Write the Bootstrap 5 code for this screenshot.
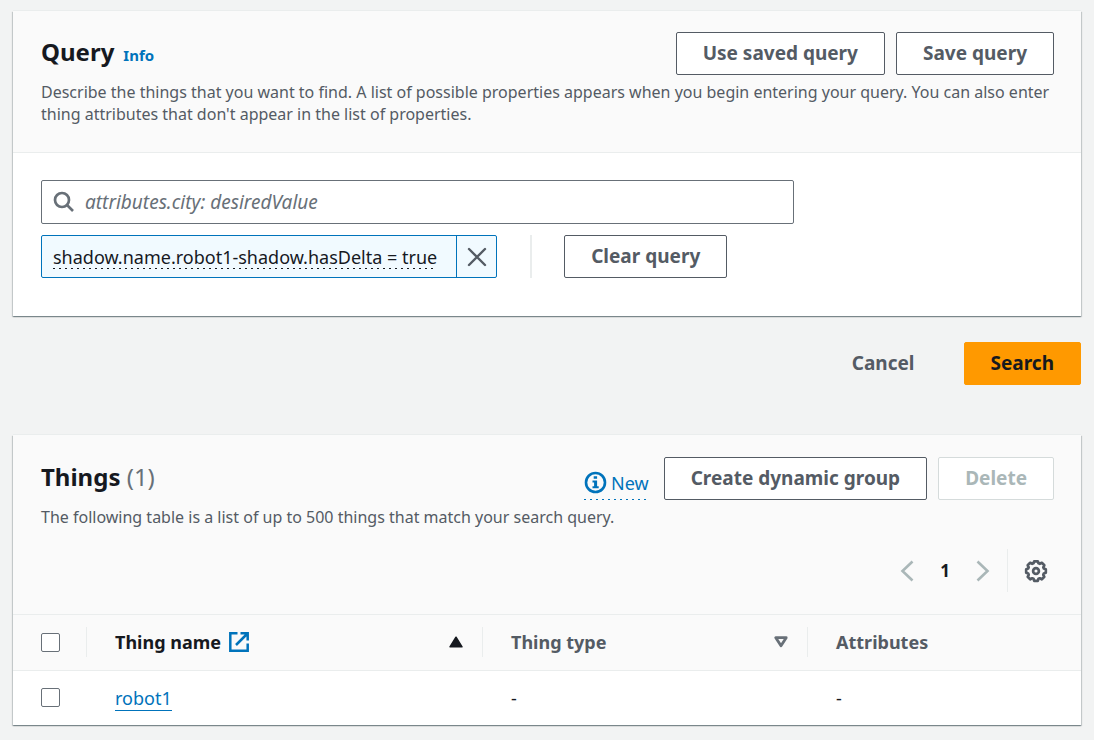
<!DOCTYPE html>
<html lang="en">
<head>
<meta charset="utf-8">
<meta name="viewport" content="width=device-width, initial-scale=1">
<title>Query things</title>
<link rel="stylesheet" href="https://cdn.jsdelivr.net/npm/bootstrap@5.3.0/dist/css/bootstrap.min.css">
<style>
  :root {
    --ink: #16191f;
    --ink-soft: #545b64;
    --ink-muted: #687078;
    --accent: #0073bb;
    --rule: #eaeded;
    --rule-off: #d5dbdb;
    --text-off: #aab7b8;
    --header: #fafafa;
  }
  body {
    font-family: "Noto Sans", "Open Sans", sans-serif;
    font-size: 18px;
    line-height: 24px;
    color: var(--ink);
    background: #f2f3f3;
  }
  a { color: var(--accent); }
  .page { padding: 11px 13px 14px; }
  .panel {
    background: #fff;
    box-shadow: 0 1px 1px 0 rgba(0, 28, 36, .3), 1px 1px 1px 0 rgba(0, 28, 36, .15), -1px 1px 1px 0 rgba(0, 28, 36, .15), 0 -1px 0 0 var(--rule);
  }
  .panel-top { background: var(--header); padding: 21px 27px 27px 28px; border-bottom: 1px solid var(--rule); }
  .panel-list { padding-top: 22px; padding-bottom: 22px; }
  .panel-main { padding: 27px 28px 38px; }
  .panel h2 { font-size: 24px; line-height: 40px; font-weight: 700; }
  .count { font-weight: 400; color: var(--ink-muted); }
  .info-link { font-size: 15px; font-weight: 700; text-decoration: none; }
  .note { font-size: 16px; line-height: 22px; color: var(--ink-soft); margin: 6px 0 0; }
  .btn {
    --bs-btn-font-size: 19px;
    --bs-btn-font-weight: 700;
    --bs-btn-line-height: 25px;
    --bs-btn-padding-x: 26px;
    --bs-btn-padding-y: 8px;
    --bs-btn-border-radius: 2px;
  }
  .btn-plain {
    --bs-btn-color: var(--ink-soft);
    --bs-btn-bg: #fff;
    --bs-btn-border-color: var(--ink-soft);
    --bs-btn-hover-bg: var(--header);
    --bs-btn-hover-color: var(--ink);
    --bs-btn-hover-border-color: var(--ink);
    --bs-btn-disabled-color: var(--text-off);
    --bs-btn-disabled-bg: #fff;
    --bs-btn-disabled-border-color: var(--rule-off);
    --bs-btn-disabled-opacity: 1;
  }
  .btn-quiet { --bs-btn-color: var(--ink-soft); }
  .btn-go {
    --bs-btn-color: var(--ink);
    --bs-btn-bg: #f90;
    --bs-btn-border-color: #f90;
    --bs-btn-hover-bg: #ec7211;
    --bs-btn-hover-border-color: #ec7211;
  }
  .gap-title { gap: 9px; }
  .gap-btn { gap: 11px; }
  .search-box { border: 1px solid var(--ink-muted); border-radius: 2px; height: 44px; padding-left: 11px; gap: 10px; }
  .search-box input { font-size: 19px; outline: 0; color: var(--ink); }
  .search-box input::placeholder { color: var(--ink-muted); font-style: italic; opacity: 1; }
  .tokens { margin-top: 11px; }
  .token { border: 1px solid var(--accent); border-radius: 2px; background: #f1faff; height: 43px; }
  .token-label { padding: 0 19px 0 11px; }
  .dashed-line { background: repeating-linear-gradient(90deg, currentColor 0 2px, transparent 2px 6px) left bottom / 100% 1px no-repeat; }
  .tip-link { padding-bottom: 4px; height: 31px; }
  .token-close { width: 40px; border: 0; border-left: 1px solid var(--accent); background: none; color: var(--ink-soft); padding: 0; line-height: 0; }
  .split { width: 2px; background: var(--rule); margin: 0 32px 0 33px; }
  .actions { padding: 26px 0 50px; gap: 22px; }
  .icon-btn { border: 0; background: none; padding: 0; line-height: 0; }
  .paging { margin-top: 21px; }
  .pager { height: 43px; gap: 26px; font-size: 17px; font-weight: 700; }
  .pager-tools { border-left: 1px solid var(--rule); padding: 0 6px 0 16px; margin-left: 17px; }
  .grid-table { table-layout: fixed; margin: 0; }
  .grid-table > :not(caption) > * > * { padding: 0 28px; height: 55px; vertical-align: middle; border: 0; background: none; color: var(--ink); box-shadow: none; }
  .grid-table thead th { background: var(--header); border-bottom: 1px solid var(--rule); padding: 0; font-weight: 700; }
  .grid-table thead th > div { height: 30px; padding: 0 19px 0 28px; }
  .grid-table thead th:not(:last-child) > div { border-right: 1px solid var(--rule); }
  .soft { color: var(--ink-soft); }
  .grid-table .form-check-input { width: 19px; height: 19px; margin: 0; border: 1px solid var(--ink-muted); border-radius: 2px; display: block; }
  .row-link { text-decoration: none; border-bottom: 1px solid var(--accent); }
  .c-pick { width: 74px; }
  .c-name { width: 396px; }
  .c-type { width: 325px; }
  svg { flex: none; }
</style>
</head>
<body>
<main class="page">
  <section class="panel">
    <header class="panel-top">
      <div class="d-flex justify-content-between align-items-start">
        <div class="d-flex align-items-baseline gap-title">
          <h2 class="mb-0">Query</h2>
          <a class="info-link" href="#">Info</a>
        </div>
        <div class="d-flex gap-btn">
          <button type="button" class="btn btn-plain">Use saved query</button>
          <button type="button" class="btn btn-plain">Save query</button>
        </div>
      </div>
      <p class="note">Describe the things that you want to find. A list of possible properties appears when you begin entering your query. You can also enter thing attributes that don't appear in the list of properties.</p>
    </header>
    <div class="panel-main">
      <div class="row">
        <div class="col-9">
          <div class="search-box d-flex align-items-center">
            <svg width="22" height="22" viewBox="0 0 22 22" fill="none" stroke="#687078" stroke-width="2.7" aria-hidden="true"><circle cx="9" cy="9" r="7"/><path d="M14 14l6 6"/></svg>
            <input class="border-0 bg-transparent flex-grow-1 p-0" type="text" placeholder="attributes.city: desiredValue" aria-label="Query">
          </div>
        </div>
      </div>
      <div class="tokens d-flex">
        <div class="token d-flex">
          <div class="token-label d-flex align-items-center"><span class="dashed-line">shadow.name.robot1-shadow.hasDelta = true</span></div>
          <button class="token-close" type="button" aria-label="Remove filter">
            <svg width="20" height="20" viewBox="0 0 20 20" fill="none" stroke="currentColor" stroke-width="2.4" stroke-linecap="round" aria-hidden="true"><path d="M2 2l16 16M18 2L2 18"/></svg>
          </button>
        </div>
        <div class="split"></div>
        <button type="button" class="btn btn-plain">Clear query</button>
      </div>
    </div>
  </section>

  <div class="actions d-flex justify-content-end">
    <button type="button" class="btn btn-quiet">Cancel</button>
    <button type="button" class="btn btn-go">Search</button>
  </div>

  <section class="panel">
    <header class="panel-top panel-list">
      <div class="d-flex justify-content-between align-items-start">
        <h2 class="mb-0">Things <span class="count">(1)</span></h2>
        <div class="d-flex gap-btn align-items-end">
          <a class="dashed-line tip-link d-flex align-items-center text-decoration-none gap-1 me-1" href="#">
            <svg width="23" height="23" viewBox="0 0 23 23" aria-hidden="true"><circle cx="11.500" cy="11.500" r="9.500" fill="none" stroke="#0073bb" stroke-width="2.600"/><path d="M9.700 5.300h3.400v2.500H9.700zM8.500 9.500h4.600v5.700h1.600v2H8.500v-2h1.600v-3.700H8.500z" fill="#0073bb"/></svg>
            <span>New</span>
          </a>
          <button type="button" class="btn btn-plain">Create dynamic group</button>
          <button type="button" class="btn btn-plain" disabled>Delete</button>
        </div>
      </div>
      <p class="note">The following table is a list of up to 500 things that match your search query.</p>
      <nav class="paging d-flex justify-content-end" aria-label="Table pages">
        <div class="pager d-flex align-items-center">
          <button class="icon-btn" type="button" aria-label="Previous page"><svg width="14" height="22" viewBox="0 0 14 22" fill="none" stroke="#aab7b8" stroke-width="2.600" aria-hidden="true"><path d="M12.500 1.500L2.500 11l10 9.500"/></svg></button>
          <span>1</span>
          <button class="icon-btn" type="button" aria-label="Next page"><svg width="14" height="22" viewBox="0 0 14 22" fill="none" stroke="#aab7b8" stroke-width="2.600" aria-hidden="true"><path d="M1.500 1.500L11.500 11l-10 9.500"/></svg></button>
        </div>
        <div class="pager-tools d-flex align-items-center">
          <button class="icon-btn" type="button" aria-label="Preferences"><svg width="24" height="24" viewBox="0 0 24 24" fill="none" stroke="#545b64" stroke-width="2.700" stroke-linejoin="round" aria-hidden="true"><path d="M10.200 2.300h3.600l.7 2 1.300.5 2-1 2.500 2.500-1 2 .5 1.200 2 .7v3.600l-2 .7-.5 1.300 1 2-2.500 2.500-2-1-1.300.5-.7 2h-3.600l-.7-2-1.300-.5-2 1-2.500-2.500 1-2-.5-1.300-2-.7v-3.600l2-.7.5-1.200-1-2 2.500-2.500 2 1 1.300-.5z"/><circle cx="12" cy="12" r="2.900"/></svg></button>
        </div>
      </nav>
    </header>
    <table class="table grid-table">
      <colgroup><col class="c-pick"><col class="c-name"><col class="c-type"><col></colgroup>
      <thead>
        <tr>
          <th scope="col"><div class="d-flex align-items-center"><input class="form-check-input" type="checkbox" aria-label="Select all things"></div></th>
          <th scope="col"><div class="d-flex align-items-center"><span>Thing name</span>
            <svg class="ms-2" width="20" height="20" viewBox="0 0 20 20" fill="none" stroke="#0073bb" stroke-width="2.500" aria-hidden="true"><path d="M8.500 1.300H1.300v17.400h17.400v-7.200M11.500 1.300h7.200v7.200M18.500 1.500L7 13"/></svg>
            <svg class="ms-auto" width="14" height="12" viewBox="0 0 14 12" fill="#16191f" stroke="#16191f" stroke-width="1.500" stroke-linejoin="round" aria-hidden="true"><path d="M7 1.200L13 10.800H1z"/></svg></div></th>
          <th scope="col"><div class="d-flex align-items-center soft"><span>Thing type</span>
            <svg class="ms-auto" width="14" height="12" viewBox="0 0 14 12" fill="none" stroke="#687078" stroke-width="2.800" stroke-linejoin="round" aria-hidden="true"><path d="M1.800 1.700h10.400L7 9.800z"/></svg></div></th>
          <th scope="col"><div class="d-flex align-items-center soft">Attributes</div></th>
        </tr>
      </thead>
      <tbody>
        <tr>
          <td><input class="form-check-input" type="checkbox" aria-label="Select robot1"></td>
          <td><a class="row-link" href="#">robot1</a></td>
          <td>-</td>
          <td>-</td>
        </tr>
      </tbody>
    </table>
  </section>
</main>
<script src="https://cdn.jsdelivr.net/npm/bootstrap@5.3.0/dist/js/bootstrap.bundle.min.js"></script>
</body>
</html>
